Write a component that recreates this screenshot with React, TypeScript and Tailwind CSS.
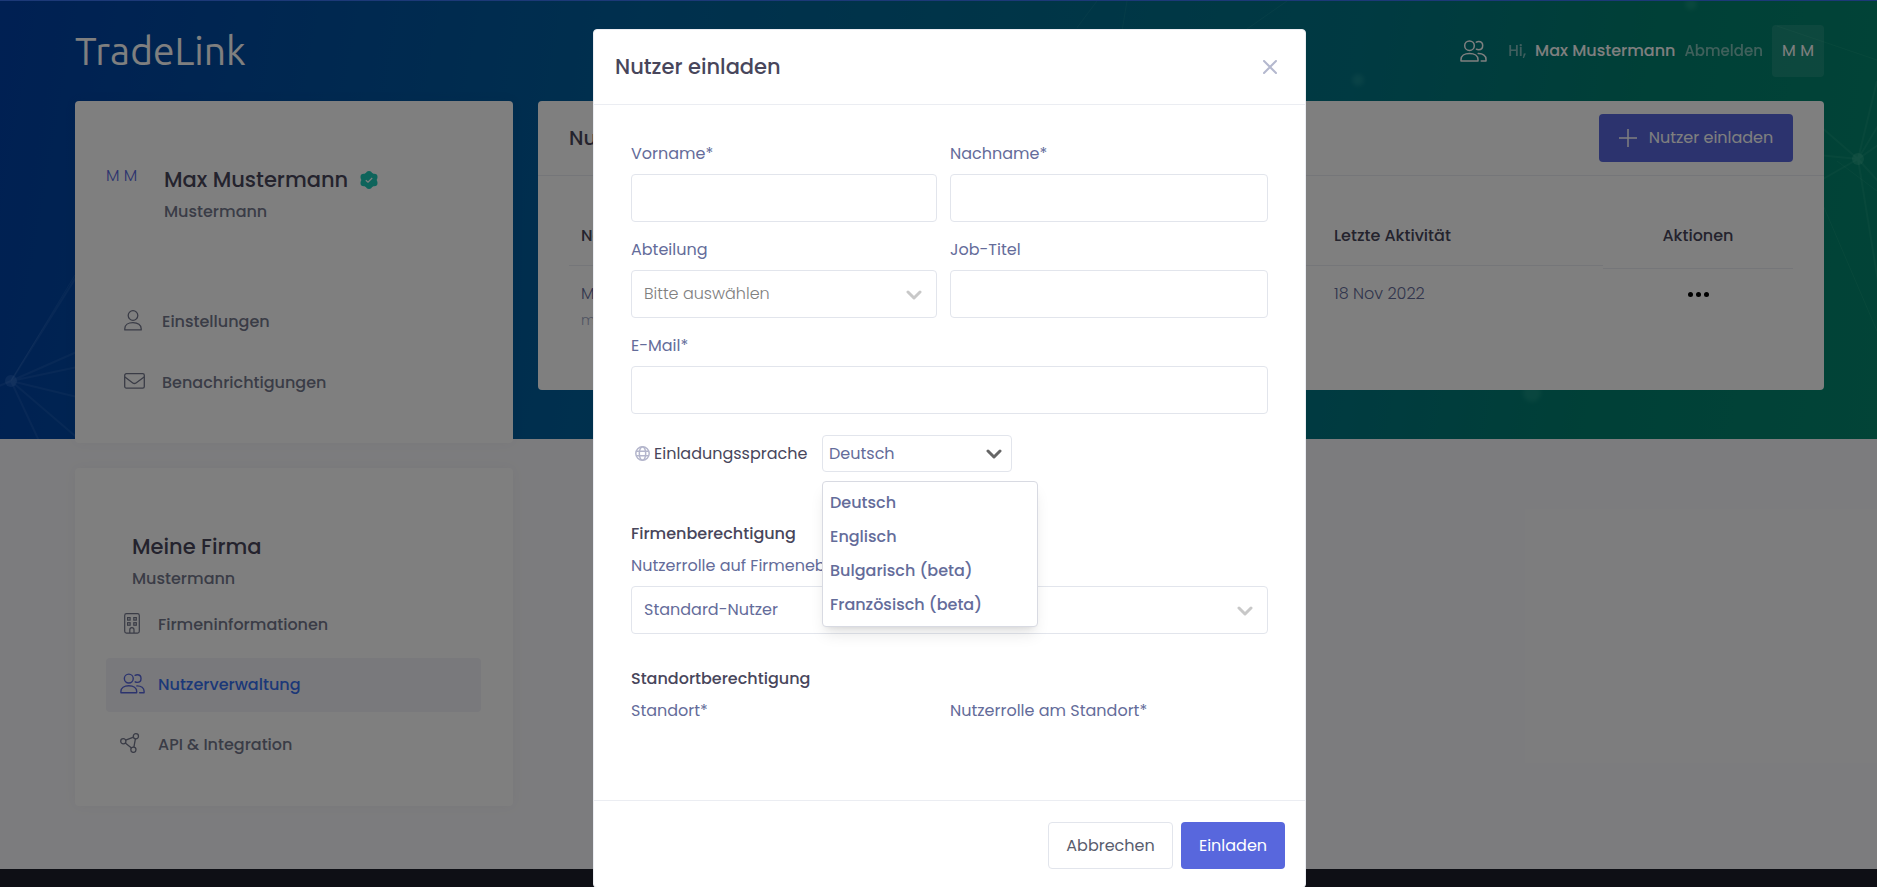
import { useState, type ReactNode } from 'react';

const LANGUAGES = ['Deutsch', 'Englisch', 'Bulgarisch (beta)', 'Französisch (beta)'];

function PeopleIcon({ className = '' }: { className?: string }) {
    return (
        <svg className={className} viewBox="0 0 27 22" fill="none" stroke="currentColor" strokeWidth="1.5" strokeLinecap="round" strokeLinejoin="round">
            <circle cx="9.5" cy="5.7" r="4.8" />
            <path d="M1 21v-1.5c0-3.6 3.4-6 8.5-6s8.5 2.4 8.5 6V21z" />
            <path d="M16.3 2.2c1-.6 1.5-.7 2.3-.7 2.4 0 4.1 1.7 4.1 4.1s-1.7 4.2-4.1 4.2c-.8 0-1.5-.1-2.2-.6" />
            <path d="M18.2 13.6c4.8-.1 7.8 2.2 7.8 5.6V21h-4.8" />
        </svg>
    );
}

function PersonIcon() {
    return (
        <svg className="w-[18px] h-[21px]" viewBox="0 0 18 21" fill="none" stroke="currentColor" strokeWidth="1.3" strokeLinejoin="round">
            <circle cx="9" cy="5.5" r="4.8" />
            <path d="M.8 19.9v-1.2c0-3.6 3.3-6 8.2-6s8.2 2.4 8.2 6v1.2z" />
        </svg>
    );
}

function MailIcon() {
    return (
        <svg className="w-[21px] h-[16px]" viewBox="0 0 21 16" fill="none" stroke="currentColor" strokeWidth="1.3" strokeLinejoin="round">
            <rect x=".7" y=".7" width="19.6" height="14.4" rx="1.6" />
            <path d="M.9 3.9l7.9 6c1 .8 2.2.8 3.2 0l8.1-6" />
        </svg>
    );
}

function BuildingIcon() {
    return (
        <svg className="w-4 h-[21px]" viewBox="0 0 16 21" fill="none" stroke="currentColor" strokeWidth="1.2">
            <rect x=".7" y=".7" width="14.6" height="19.4" rx="1.8" />
            <rect x="3.6" y="4.6" width="2.5" height="2.5" />
            <rect x="9.8" y="4.6" width="2.5" height="2.5" />
            <rect x="3.6" y="9.7" width="2.5" height="2.5" />
            <rect x="9.8" y="9.7" width="2.5" height="2.5" />
            <path d="M5.8 20v-3.2a2.1 2.1 0 0 1 4.2 0V20" />
        </svg>
    );
}

function NodesIcon() {
    return (
        <svg className="w-5 h-5" viewBox="0 0 20 20" fill="none" stroke="currentColor" strokeWidth="1.3">
            <circle cx="3.3" cy="8.2" r="2.6" />
            <circle cx="15.9" cy="3.3" r="2.6" />
            <circle cx="13.4" cy="16.8" r="2.6" />
            <path d="M5.7 7.2l7.8-3M15.4 5.9l-1.5 8.3M5.3 9.9l6.2 5" />
        </svg>
    );
}

function VerifiedBadge() {
    return (
        <svg className="w-[18px] h-[18px] ml-3" viewBox="0 0 18 18">
            <g fill="#1dc9b7">
                <circle cx="9" cy="9" r="7.8" />
                <circle cx="9" cy="3" r="3" />
                <circle cx="9" cy="15" r="3" />
                <circle cx="3.7" cy="6" r="3.2" />
                <circle cx="14.3" cy="6" r="3.2" />
                <circle cx="3.7" cy="12" r="3.2" />
                <circle cx="14.3" cy="12" r="3.2" />
            </g>
            <path d="M5.8 9.2l2.2 2L12.2 7" fill="none" stroke="white" strokeWidth="1.2" />
        </svg>
    );
}

function Chevron({ className }: { className: string }) {
    return (
        <svg className={`pointer-events-none absolute w-4 h-[10px] ${className}`} viewBox="0 0 16 10" fill="none" stroke="currentColor" strokeWidth="3" strokeLinecap="round" strokeLinejoin="round">
            <path d="M2 2l6 6 6-6" />
        </svg>
    );
}

function Network() {
    return (
        <>
            <svg className="absolute left-0 bottom-0 w-[300px] h-[439px]" viewBox="0 0 300 439" fill="none" stroke="#9cc4ff" strokeWidth="2">
                <g strokeOpacity=".1">
                    <path d="M11 381L90 255M11 381l95-42M11 381l95-20M11 381l95 23M11 381l29 62M11 381l70 60M11 381l-12 5" />
                    <path d="M11 381L75 275" strokeWidth="1" />
                </g>
                <circle cx="11" cy="381" r="6" fill="#7fb0ff" fillOpacity=".18" stroke="none" />
            </svg>
            <svg className="absolute right-0 top-0 w-[800px] h-[439px]" viewBox="0 0 800 439" fill="none" stroke="#a0ffd8" strokeWidth="2">
                <g strokeOpacity=".08">
                    <path d="M781 158l19-78M781 158l-60-52M781 158l-70 40M781 158l-50-5M781 158l22 135M781 158l20 22M781 158l20-14M781 158l24-40" />
                    <path d="M700 25l100 34M740 190l60 140M760 160l60 45M20 0L-10 40M50 0l-5 30M210 0l-40 28" strokeWidth="1" />
                </g>
                <circle cx="781" cy="158" r="6" fill="#a0ffd8" fillOpacity=".15" stroke="none" />
                <g className="blur-[2px]" fill="#a0ffd8" fillOpacity=".12" stroke="none">
                    <circle cx="281" cy="79" r="6" />
                    <circle cx="614" cy="3" r="6" />
                    <circle cx="455" cy="392" r="9" />
                </g>
            </svg>
        </>
    );
}

interface NavItemProps {
    icon: ReactNode;
    label: string;
    active?: boolean;
}

function NavItem({ icon, label, active = false }: NavItemProps) {
    return (
        <a
            href="#"
            className={`flex items-center h-[54px] rounded text-base font-medium ${active ? 'bg-[#f2f3f8] text-[#3871f0]' : 'text-[#74788d]'}`}
        >
            {icon}
            {label}
        </a>
    );
}

function Field({ id, label }: { id: string; label: string }) {
    return (
        <div>
            <label htmlFor={id} className="block mb-2 leading-6">{label}</label>
            <input id={id} type="text" className="block w-full h-12 px-3 border border-[#e2e5ec] rounded bg-white" />
        </div>
    );
}

function InviteModal() {
    const [language, setLanguage] = useState('Deutsch');

    return (
        <div role="dialog" aria-labelledby="modal-title" className="w-full max-w-[713px] bg-white border border-[#ebedf2] rounded text-base text-[#646c9a]">
            <div className="flex items-center justify-between h-[75px] pl-[21px] pr-7 border-b border-[#ebedf2]">
                <h2 id="modal-title" className="text-[21px] font-medium text-[#48465b]">Nutzer einladen</h2>
                <button type="button" aria-label="Schließen" className="text-[#b4b8ce]">
                    <svg className="w-[14px] h-[14px]" viewBox="0 0 14 14" fill="none" stroke="currentColor" strokeWidth="2" strokeLinecap="round">
                        <path d="M1 1l12 12M13 1L1 13" />
                    </svg>
                </button>
            </div>

            <div className="px-[37px] pt-[37px] pb-[77px]">
                <div className="grid grid-cols-[306fr_318fr] gap-x-[13px] gap-y-4">
                    <Field id="firstName" label="Vorname*" />
                    <Field id="lastName" label="Nachname*" />
                    <div>
                        <label htmlFor="department" className="block mb-2 leading-6">Abteilung</label>
                        <div className="relative">
                            <select id="department" className="block w-full h-12 px-3 border border-[#e2e5ec] rounded bg-white appearance-none text-[#808080] font-light">
                                <option>Bitte auswählen</option>
                            </select>
                            <Chevron className="right-[15px] top-5 text-[#c8c8c8]" />
                        </div>
                    </div>
                    <Field id="jobTitle" label="Job-Titel" />
                    <div className="col-span-2">
                        <Field id="email" label="E-Mail*" />
                    </div>
                </div>

                <div className="flex items-center mt-[21px] pl-1">
                    <svg className="w-[15px] h-[15px] mr-1 text-[#b4b6cc]" viewBox="0 0 15 15" fill="none" stroke="currentColor" strokeWidth="1.5">
                        <circle cx="7.5" cy="7.5" r="6.7" />
                        <ellipse cx="7.5" cy="7.5" rx="3.2" ry="6.7" />
                        <path d="M1.2 5.2h12.6M1.2 9.8h12.6" />
                    </svg>
                    <label htmlFor="language" className="w-[168px] text-[#48465b]">Einladungssprache</label>
                    <div className="relative w-[190px]">
                        <select
                            id="language"
                            value={language}
                            onChange={(e) => setLanguage(e.target.value)}
                            className="block w-full h-[37px] px-[6px] border border-[#e2e5ec] rounded bg-white appearance-none"
                        >
                            {LANGUAGES.map((l) => <option key={l}>{l}</option>)}
                        </select>
                        <Chevron className="right-[10px] top-[14px] text-[#666666]" />
                        <ul className="absolute left-0 top-[46px] z-10 w-[216px] py-1 bg-white border border-[#d8dae2] rounded shadow-lg">
                            {LANGUAGES.map((l) => (
                                <li key={l}>
                                    <button type="button" onClick={() => setLanguage(l)} className="block w-full h-[34px] px-[7px] text-left font-medium">
                                        {l}
                                    </button>
                                </li>
                            ))}
                        </ul>
                    </div>
                </div>

                <h3 className="mt-[50px] leading-6 font-medium text-[#48465b]">Firmenberechtigung</h3>
                <label htmlFor="companyRole" className="block my-2 leading-6">Nutzerrolle auf Firmenebene*</label>
                <div className="relative">
                    <select id="companyRole" className="block w-full h-12 px-3 border border-[#e2e5ec] rounded bg-white appearance-none">
                        <option>Standard-Nutzer</option>
                    </select>
                    <Chevron className="right-[15px] top-5 text-[#c8c8c8]" />
                </div>

                <h3 className="mt-[33px] leading-6 font-medium text-[#48465b]">Standortberechtigung</h3>
                <div className="grid grid-cols-[306fr_318fr] gap-x-[13px] mt-2 leading-6">
                    <span>Standort*</span>
                    <span>Nutzerrolle am Standort*</span>
                </div>
            </div>

            <div className="flex justify-end gap-2 px-5 pt-[21px] pb-[18px] border-t border-[#ebedf2]">
                <button type="button" className="w-[125px] h-[47px] border border-[#e2e5ec] rounded text-[#595d6e]">Abbrechen</button>
                <button type="button" className="w-[104px] h-[47px] rounded bg-[#5867dd] text-white">Einladen</button>
            </div>
        </div>
    );
}

export default function App() {
    return (
        <div className="relative flex flex-col h-screen overflow-hidden bg-[#f9f9fc] font-['Poppins','Inter',sans-serif]">
            <div className="absolute inset-x-0 top-0 h-[439px] overflow-hidden border-t border-[#3872f0] bg-[linear-gradient(100deg,#0040a6_0%,#00609c_33%,#007484_70%,#00806e_85%,#04886e_100%)]">
                <Network />
            </div>

            <header className="relative flex shrink-0 items-center justify-between h-[101px] pl-[75px] pr-[53px]">
                <a href="#" className="pt-[2px] text-[39px] text-white font-['Ubuntu','Noto_Sans',sans-serif]">TradeLink</a>
                <div className="flex items-center pt-px text-white">
                    <PeopleIcon className="w-[27px] h-[22px] mr-[21px]" />
                    <span className="mr-[9px] text-[15px] font-medium opacity-50">Hi,</span>
                    <span className="mr-[9px] text-base font-medium">Max Mustermann</span>
                    <a href="#" className="mr-[9px] text-[15px] font-medium opacity-50">Abmelden</a>
                    <span className="flex items-center justify-center w-[52px] h-[52px] rounded bg-white/10 text-base">M M</span>
                </div>
            </header>

            <main className="relative flex shrink-0 items-start gap-[25px] pl-[75px] pr-[53px] pb-[63px]">
                <aside className="w-[438px] shrink-0">
                    <section className="h-[342px] px-[31px] pt-[61px] bg-white rounded shadow-[0_0_13px_rgba(82,63,105,0.05)]">
                        <div className="flex">
                            <span className="w-[58px] pt-[2px] text-base leading-6 font-light text-[#5867dd]">M M</span>
                            <div>
                                <div className="flex items-center h-9 text-[21px] font-medium text-[#48465b]">
                                    Max Mustermann
                                    <VerifiedBadge />
                                </div>
                                <p className="mt-[2px] text-base font-medium text-[#74788d]">Mustermann</p>
                            </div>
                        </div>
                        <nav className="flex flex-col gap-[7px] mt-[71px]">
                            <NavItem icon={<span className="w-[56px] pl-[18px] pb-1"><PersonIcon /></span>} label="Einstellungen" />
                            <NavItem icon={<span className="w-[56px] pl-[18px] pb-1"><MailIcon /></span>} label="Benachrichtigungen" />
                        </nav>
                    </section>

                    <section className="h-[338px] mt-[25px] pl-[31px] pr-8 pt-[63px] bg-white rounded shadow-[0_0_13px_rgba(82,63,105,0.05)]">
                        <h2 className="pl-[26px] text-[21px] leading-8 font-medium text-[#48465b]">Meine Firma</h2>
                        <p className="pl-[26px] mt-1 text-base font-medium text-[#74788d]">Mustermann</p>
                        <nav className="flex flex-col gap-[6px] mt-[7px]">
                            <NavItem icon={<span className="w-[52px] pl-[18px] pb-1"><BuildingIcon /></span>} label="Firmeninformationen" />
                            <NavItem icon={<span className="w-[52px] pl-[14px] pb-1 text-[#5867dd]"><PeopleIcon className="w-[25px] h-[21px]" /></span>} label="Nutzerverwaltung" active />
                            <NavItem icon={<span className="w-[52px] pl-[14px] pb-1"><NodesIcon /></span>} label="API & Integration" />
                        </nav>
                    </section>
                </aside>

                <section className="flex-1 h-[289px] bg-white rounded">
                    <div className="flex items-center justify-between h-[75px] px-[31px] border-b border-[#ebedf2]">
                        <h1 className="text-xl font-medium text-[#48465b]">Nutzer</h1>
                        <button type="button" className="flex items-center justify-center gap-3 w-[194px] h-12 rounded bg-[#5867dd] text-base text-white">
                            <svg className="w-[18px] h-[18px]" viewBox="0 0 18 18" stroke="currentColor" strokeWidth="1.5">
                                <path d="M9 0v18M0 9h18" />
                            </svg>
                            Nutzer einladen
                        </button>
                    </div>
                    <div className="px-[31px] pt-[42px]">
                        <table className="w-full table-fixed text-left text-base">
                            <thead className="text-[#48465b]">
                                <tr>
                                    <th className="p-0 align-top font-medium"><div className="h-[48px] pt-[6px] px-3 border-b border-[#ebedf2]">Name</div></th>
                                    <th className="w-[281px] p-0 align-top font-medium"><div className="h-[48px] pt-[6px] px-3 border-b border-[#ebedf2]">Letzte Aktivität</div></th>
                                    <th className="w-[190px] p-0 align-top font-medium"><div className="h-[51px] pt-[6px] text-center border-b border-[#ebedf2]">Aktionen</div></th>
                                </tr>
                            </thead>
                            <tbody className="text-[#646c9a]">
                                <tr>
                                    <td className="px-3 pt-[13px] align-top font-light">
                                        Max
                                        <div className="mt-1 text-sm text-[#a1a8c3]">max</div>
                                    </td>
                                    <td className="px-3 pt-[13px] align-top font-light">18 Nov 2022</td>
                                    <td className="pt-[11px] align-top text-center">
                                        <button type="button" aria-label="Aktionen" className="inline-flex gap-[3px] py-[10px]">
                                            <span className="w-[5px] h-[5px] rounded-full bg-black" />
                                            <span className="w-[5px] h-[5px] rounded-full bg-black" />
                                            <span className="w-[5px] h-[5px] rounded-full bg-black" />
                                        </button>
                                    </td>
                                </tr>
                            </tbody>
                        </table>
                    </div>
                </section>
            </main>

            <footer className="relative grow bg-[#1c1f2b]" />

            <div className="absolute inset-0 z-20 flex items-start justify-center overflow-hidden pl-[22px] pt-[29px] bg-black/50">
                <InviteModal />
            </div>
        </div>
    );
}
